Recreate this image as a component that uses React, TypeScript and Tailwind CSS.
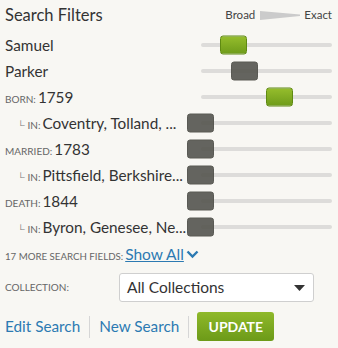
import React from 'react';

type Row = {
  label?: string;
  sub?: boolean;
  value: string;
  thumb: number;
  active?: boolean;
};

const rows: Row[] = [
  { value: 'Samuel', thumb: 33, active: true },
  { value: 'Parker', thumb: 44 },
  { label: 'BORN:', value: '1759', thumb: 79, active: true },
  { label: 'IN:', sub: true, value: 'Coventry, Tolland, ...', thumb: 0 },
  { label: 'MARRIED:', value: '1783', thumb: 0 },
  { label: 'IN:', sub: true, value: 'Pittsfield, Berkshire...', thumb: 0 },
  { label: 'DEATH:', value: '1844', thumb: 0 },
  { label: 'IN:', sub: true, value: 'Byron, Genesee, Ne...', thumb: 0 },
];

function Slider({ left, active }: { left: number; active?: boolean }) {
  return (
    <div className="relative h-full w-[145px] shrink-0">
      <div className="absolute left-[14px] right-0 top-1/2 h-[4px] -translate-y-1/2 rounded-full bg-[#dddcda]" />
      <div
        className={
          active
            ? 'absolute top-1/2 h-[19px] w-[27px] -translate-y-1/2 rounded-[3px] border border-[#5f8a12] bg-gradient-to-b from-[#95bd2c] to-[#6f9c1a]'
            : 'absolute top-1/2 h-[19px] w-[27px] -translate-y-1/2 rounded-[3px] border border-[#4a4a44] bg-[#55554f] opacity-90'
        }
        style={{ left }}
      />
    </div>
  );
}

export default function App() {
  return (
    <div className="h-[348px] w-[338px] bg-[#f8f7f3] pl-[5px] pr-[6px] text-[#333] font-['Lato',sans-serif]">
      {/* Header */}
      <div className="flex h-[32px] items-center justify-between pb-[2px]">
        <span className="text-[16.5px]">Search Filters</span>
        <div className="flex items-center text-[11.5px] text-[#444]">
          <span>Broad</span>
          <svg width="40" height="9" viewBox="0 0 40 9" className="ml-[5px] mr-[4px]">
            <polygon points="0,0 40,3.5 40,5 0,9" fill="#cbcbcb" />
          </svg>
          <span>Exact</span>
        </div>
      </div>

      {rows.map((r, i) => (
        <div key={i} className="flex h-[26px] items-center">
          <div className="flex min-w-0 flex-1 items-baseline whitespace-nowrap">
            {r.sub && <span className="ml-[12px] mr-[3px] text-[10px] text-[#777]">└</span>}
            {r.label && <span className="mr-[2px] text-[10px] text-[#666]">{r.label}</span>}
            <span className="text-[15.3px]">{r.value}</span>
          </div>
          <Slider left={r.thumb} active={r.active} />
        </div>
      ))}

      {/* More fields */}
      <div className="flex h-[26px] items-baseline pt-[3px]">
        <span className="mr-[2px] text-[9.7px] text-[#666]">17 MORE SEARCH FIELDS:</span>
        <a href="#" className="text-[15.5px] text-[#2c7ab2] underline">
          Show All
        </a>
        <svg width="13" height="9" viewBox="0 0 13 9" className="ml-[2px] self-center">
          <path d="M1.5 1.5 L6.5 6.5 L11.5 1.5" fill="none" stroke="#2c7ab2" strokeWidth="2.4" />
        </svg>
      </div>

      {/* Collection */}
      <div className="mt-[7px] flex items-center">
        <span className="w-[114px] text-[10px] text-[#666]">COLLECTION:</span>
        <div className="flex h-[29px] w-[195px] items-center justify-between rounded-[3px] border border-[#cfcfcf] bg-white pl-[7px] pr-[8px]">
          <span className="text-[15.5px]">All Collections</span>
          <svg width="11" height="6" viewBox="0 0 11 6">
            <polygon points="0,0 11,0 5.5,6" fill="#333" />
          </svg>
        </div>
      </div>

      {/* Actions */}
      <div className="mt-[10px] flex items-center">
        <a href="#" className="text-[15.3px] text-[#2c7ab2]">Edit Search</a>
        <div className="mx-[9px] h-[22px] w-px bg-[#d6d6d6]" />
        <a href="#" className="text-[15.3px] text-[#2c7ab2]">New Search</a>
        <div className="ml-[9px] mr-[8px] h-[22px] w-px bg-[#d6d6d6]" />
        <button className="flex h-[29px] w-[77px] items-center justify-center rounded-[3px] bg-gradient-to-b from-[#8fb92a] to-[#6c9a18] text-[14px] font-bold text-white">
          UPDATE
        </button>
      </div>
    </div>
  );
}
